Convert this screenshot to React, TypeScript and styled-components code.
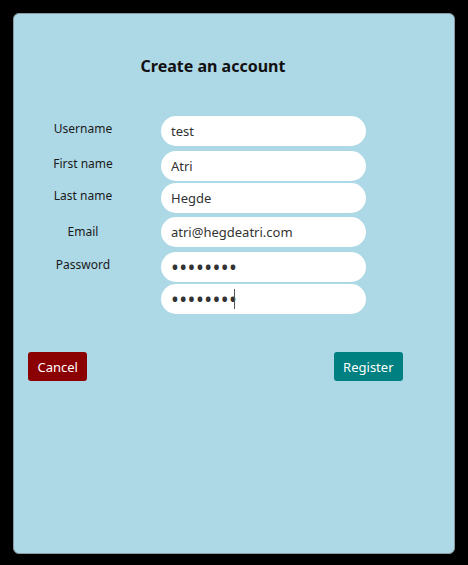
import React from "react";
import styled, { createGlobalStyle } from "styled-components";

const Global = createGlobalStyle`
  html, body { margin: 0; padding: 0; background: #000; }
  body { font-family: "Noto Sans", "Open Sans", sans-serif; }
  * { box-sizing: border-box; }
`;

const Page = styled.div`
  width: 468px;
  height: 565px;
  padding: 13px;
  background: #000;
`;

const Panel = styled.div`
  width: 442px;
  height: 541px;
  background: #add8e6;
  border: 1px solid #8a9aa0;
  border-radius: 6px;
  display: flex;
  flex-direction: column;
  padding: 0 14px;
`;

const Title = styled.h1`
  margin: 41px 0 0 0;
  font-size: 16px;
  line-height: 22px;
  font-weight: 700;
  color: #111;
  text-align: center;
  padding-right: 42px;
`;

const Form = styled.div`
  display: flex;
  flex-direction: column;
  margin-top: 39px;
`;

const Row = styled.div<{ $gap: number }>`
  display: flex;
  align-items: flex-start;
  margin-top: ${(p) => p.$gap}px;
`;

const Label = styled.label<{ $offset: number }>`
  width: 110px;
  text-align: center;
  font-size: 12px;
  line-height: 16px;
  padding-top: ${(p) => p.$offset}px;
  color: #1a1a1a;
`;

const FieldWrap = styled.div`
  position: relative;
  margin-left: 23px;
  width: 205px;
  height: 30px;
`;

const Field = styled.input<{ $mask: boolean }>`
  width: 100%;
  height: 100%;
  border: none;
  border-radius: 15px;
  background: #fff;
  padding: 0 10px;
  font-family: "Noto Sans", "Open Sans", sans-serif;
  font-size: ${(p) => (p.$mask ? 21 : 13)}px;
  letter-spacing: ${(p) => (p.$mask ? 0.4 : 0)}px;
  color: #333;
  outline: none;
`;

const Caret = styled.span`
  position: absolute;
  left: 73px;
  top: 5px;
  width: 1px;
  height: 20px;
  background: #555;
`;

const Buttons = styled.div`
  display: flex;
  justify-content: space-between;
  margin-top: 38px;
  padding-right: 37px;
`;

const Button = styled.button<{ $bg: string }>`
  height: 29px;
  padding: 0 9.5px;
  border: none;
  border-radius: 3px;
  background: ${(p) => p.$bg};
  color: #fff;
  font-family: "Noto Sans", "Open Sans", sans-serif;
  font-size: 13px;
`;

const rows = [
  { label: "Username", value: "test", type: "text", gap: 0, offset: 5 },
  { label: "First name", value: "Atri", type: "text", gap: 5, offset: 5 },
  { label: "Last name", value: "Hegde", type: "text", gap: 2, offset: 5 },
  { label: "Email", value: "atri@hegdeatri.com", type: "text", gap: 4, offset: 7 },
  { label: "Password", value: "password", type: "password", gap: 5, offset: 5 },
  { label: "", value: "password", type: "password", gap: 2, offset: 5, caret: true },
];

export default function App() {
  return (
    <Page>
      <Global />
      <Panel>
        <Title>Create an account</Title>
        <Form>
          {rows.map((r, i) => (
            <Row key={i} $gap={r.gap}>
              <Label $offset={r.offset}>{r.label}</Label>
              <FieldWrap>
                <Field
                  type={r.type}
                  defaultValue={r.value}
                  $mask={r.type === "password"}
                />
                {r.caret && <Caret />}
              </FieldWrap>
            </Row>
          ))}
        </Form>
        <Buttons>
          <Button $bg="#8b0000">Cancel</Button>
          <Button $bg="#008080">Register</Button>
        </Buttons>
      </Panel>
    </Page>
  );
}
